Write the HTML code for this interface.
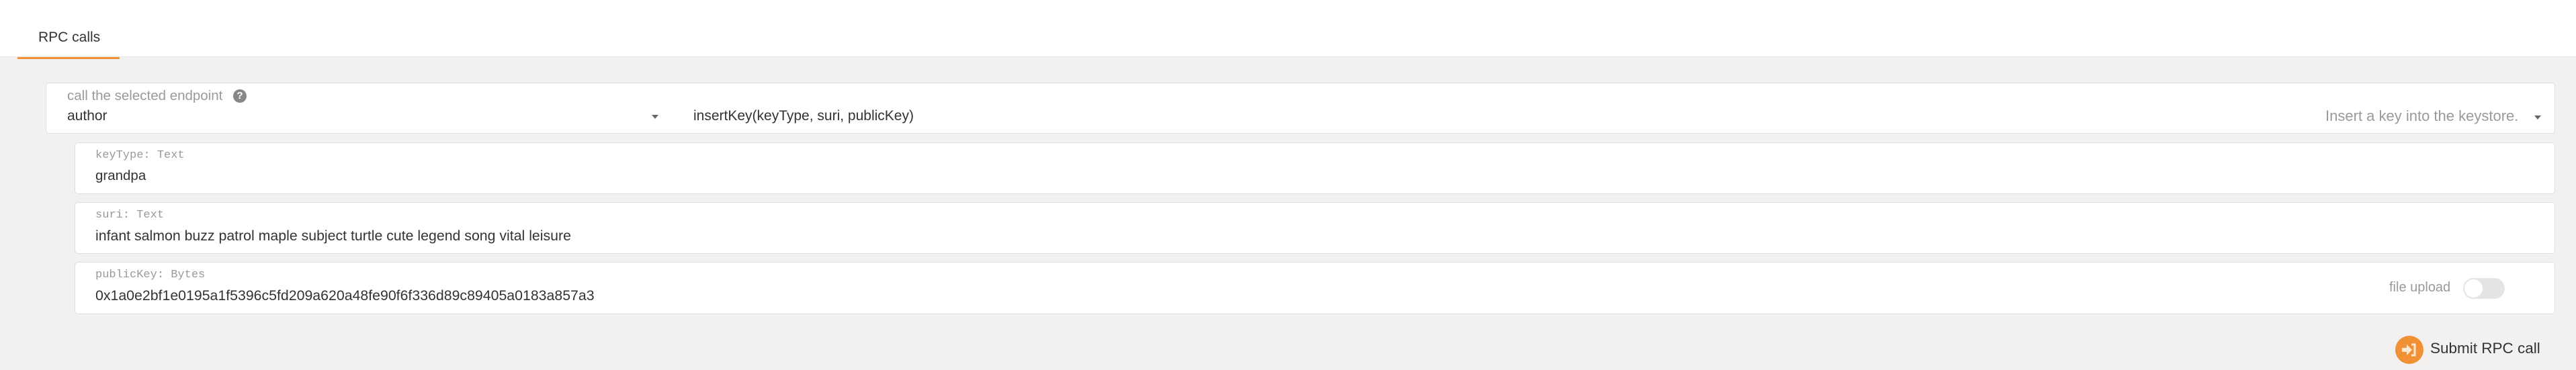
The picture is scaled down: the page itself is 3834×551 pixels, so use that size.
<!DOCTYPE html>
<html><head><meta charset="utf-8"><style>
*{margin:0;padding:0;box-sizing:border-box}
body{width:3834px;height:551px;background:#f2f1ef;font-family:"Liberation Sans",sans-serif;position:relative;overflow:hidden;color:#333}
.hdr{position:absolute;left:0;top:0;width:3834px;height:85px;background:#fff;border-bottom:1px solid #e6e6e6}
.tab{position:absolute;left:57px;top:44px;font-size:21px;color:#333}
.ul{position:absolute;left:26px;top:85px;width:152px;height:3px;background:#f19135}
.card{position:absolute;background:#fff;border:1px solid #dedede;border-radius:5px}
.lab{position:absolute;font-size:20.5px;color:#9a9a9a;white-space:nowrap}
.mono{font-family:"Liberation Mono",monospace;font-size:17px;color:#999}
.val{position:absolute;font-size:20.5px;color:#333;white-space:nowrap}
</style></head><body>
<div class="hdr"></div>
<div class="tab">RPC calls</div>
<div class="ul"></div>

<div class="card" style="left:68px;top:123px;width:3735px;height:76px"></div>
<div class="lab" style="left:100px;top:131px">call the selected endpoint</div>
<div style="position:absolute;left:347px;top:133px;width:20px;height:20px;border-radius:50%;background:#888;color:#fff;font-size:15px;font-weight:bold;text-align:center;line-height:20px">?</div>
<div class="val" style="left:100px;top:161px;font-size:21px">author</div>
<div style="position:absolute;left:970px;top:171px;width:0;height:0;border-left:5px solid transparent;border-right:5px solid transparent;border-top:6px solid #666"></div>
<div class="val" style="left:1032px;top:161px;font-size:21px">insertKey(keyType, suri, publicKey)</div>
<div class="lab" style="left:3461px;top:160px;font-size:22px">Insert a key into the keystore.</div>
<div style="position:absolute;left:3772px;top:172px;width:0;height:0;border-left:5px solid transparent;border-right:5px solid transparent;border-top:6px solid #666"></div>

<div class="card" style="left:111px;top:212px;width:3692px;height:77px"></div>
<div class="lab mono" style="left:142px;top:222px">keyType: Text</div>
<div class="val" style="left:142px;top:250px">grandpa</div>

<div class="card" style="left:111px;top:301px;width:3692px;height:77px"></div>
<div class="lab mono" style="left:142px;top:311px">suri: Text</div>
<div class="val" style="left:142px;top:339px;font-size:21.3px">infant salmon buzz patrol maple subject turtle cute legend song vital leisure</div>

<div class="card" style="left:111px;top:390px;width:3692px;height:78px"></div>
<div class="lab mono" style="left:142px;top:400px">publicKey: Bytes</div>
<div class="val" style="left:142px;top:428px;font-size:21.3px">0x1a0e2bf1e0195a1f5396c5fd209a620a48fe90f6f336d89c89405a0183a857a3</div>
<div class="lab" style="left:3556px;top:417px;font-size:20px">file upload</div>
<div style="position:absolute;left:3666px;top:414px;width:62px;height:31px;border-radius:16px;background:#e4e4e4"></div>
<div style="position:absolute;left:3668px;top:416px;width:27px;height:27px;border-radius:50%;background:#fff"></div>

<div style="position:absolute;left:3565px;top:500px;width:42px;height:42px;border-radius:50%;background:#f19135"></div>
<svg style="position:absolute;left:3573px;top:510px" width="26" height="22" viewBox="0 0 26 22"><path d="M2 8h7V3l8 8-8 8v-5H2z" fill="#fde9d6"/><path d="M16 3h5v16h-5" fill="none" stroke="#fde9d6" stroke-width="3"/></svg>
<div style="position:absolute;left:3617px;top:506px;font-size:22.5px;color:#333">Submit RPC call</div>
</body></html>
